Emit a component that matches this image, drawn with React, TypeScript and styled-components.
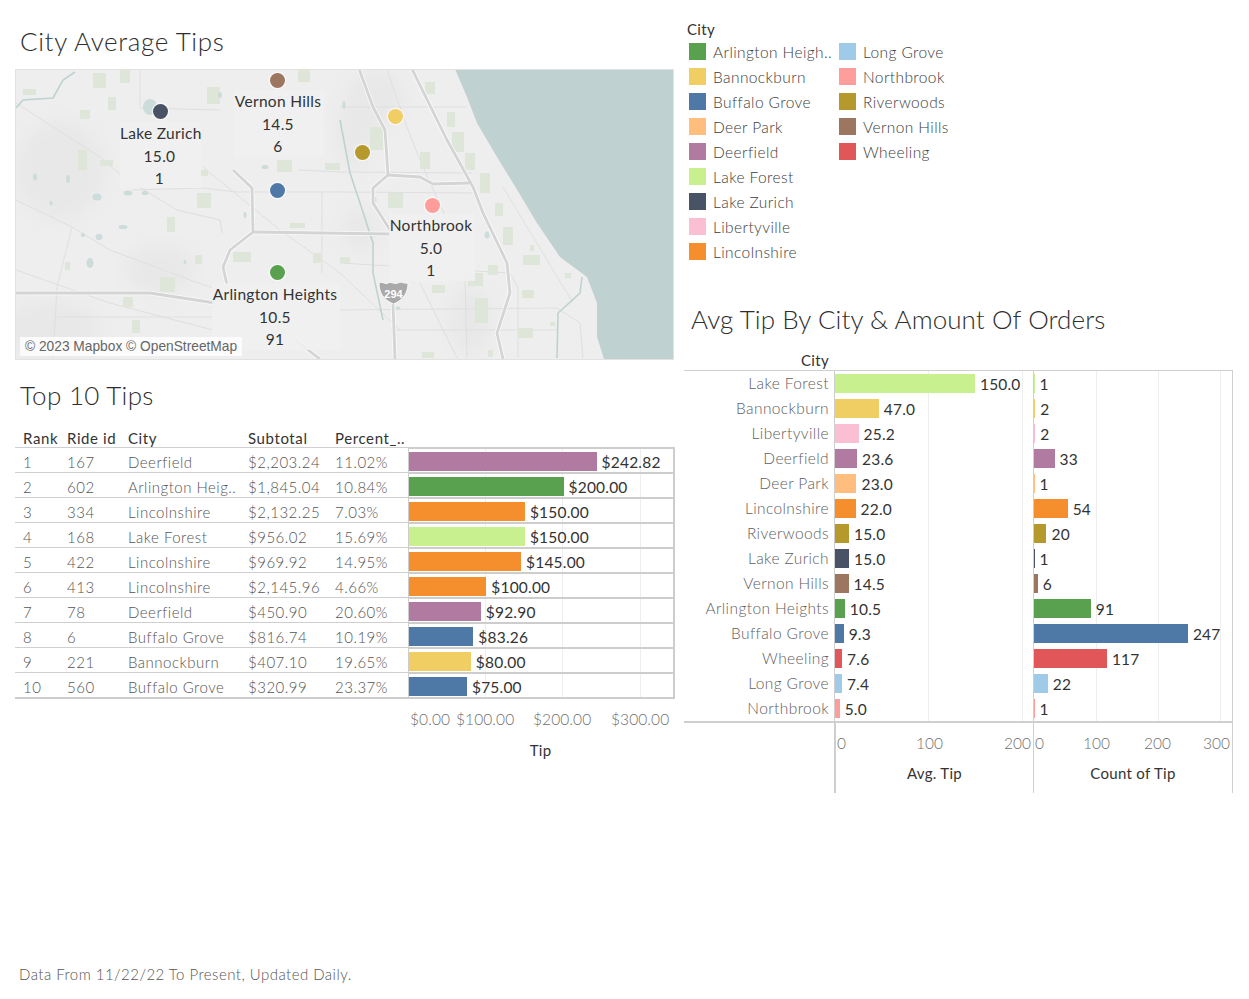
import { FC } from "react";
import styled, { createGlobalStyle } from "styled-components";

const COLORS: Record<string, string> = {
  "Arlington Heights": "#59a14f",
  Bannockburn: "#f1ce63",
  "Buffalo Grove": "#4e79a7",
  "Deer Park": "#ffbe7d",
  Deerfield: "#b07aa1",
  "Lake Forest": "#c9f08f",
  "Lake Zurich": "#495366",
  Libertyville: "#fabfd2",
  Lincolnshire: "#f58e2c",
  "Long Grove": "#a0cbe8",
  Northbrook: "#ff9d9a",
  Riverwoods: "#b6992d",
  "Vernon Hills": "#9d7660",
  Wheeling: "#e15759",
};

const LEGEND = [
  ["Arlington Heigh..", "Arlington Heights"],
  ["Bannockburn", "Bannockburn"],
  ["Buffalo Grove", "Buffalo Grove"],
  ["Deer Park", "Deer Park"],
  ["Deerfield", "Deerfield"],
  ["Lake Forest", "Lake Forest"],
  ["Lake Zurich", "Lake Zurich"],
  ["Libertyville", "Libertyville"],
  ["Lincolnshire", "Lincolnshire"],
  ["Long Grove", "Long Grove"],
  ["Northbrook", "Northbrook"],
  ["Riverwoods", "Riverwoods"],
  ["Vernon Hills", "Vernon Hills"],
  ["Wheeling", "Wheeling"],
];

const TIPS = [
  { rank: 1, ride: 167, city: "Deerfield", sub: "$2,203.24", pct: "11.02%", tip: 242.82 },
  { rank: 2, ride: 602, city: "Arlington Heights", label: "Arlington Heig..", sub: "$1,845.04", pct: "10.84%", tip: 200 },
  { rank: 3, ride: 334, city: "Lincolnshire", sub: "$2,132.25", pct: "7.03%", tip: 150 },
  { rank: 4, ride: 168, city: "Lake Forest", sub: "$956.02", pct: "15.69%", tip: 150 },
  { rank: 5, ride: 422, city: "Lincolnshire", sub: "$969.92", pct: "14.95%", tip: 145 },
  { rank: 6, ride: 413, city: "Lincolnshire", sub: "$2,145.96", pct: "4.66%", tip: 100 },
  { rank: 7, ride: 78, city: "Deerfield", sub: "$450.90", pct: "20.60%", tip: 92.9 },
  { rank: 8, ride: 6, city: "Buffalo Grove", sub: "$816.74", pct: "10.19%", tip: 83.26 },
  { rank: 9, ride: 221, city: "Bannockburn", sub: "$407.10", pct: "19.65%", tip: 80 },
  { rank: 10, ride: 560, city: "Buffalo Grove", sub: "$320.99", pct: "23.37%", tip: 75 },
];

const CITIES: [string, number, number][] = [
  ["Lake Forest", 150, 1],
  ["Bannockburn", 47, 2],
  ["Libertyville", 25.2, 2],
  ["Deerfield", 23.6, 33],
  ["Deer Park", 23, 1],
  ["Lincolnshire", 22, 54],
  ["Riverwoods", 15, 20],
  ["Lake Zurich", 15, 1],
  ["Vernon Hills", 14.5, 6],
  ["Arlington Heights", 10.5, 91],
  ["Buffalo Grove", 9.3, 247],
  ["Wheeling", 7.6, 117],
  ["Long Grove", 7.4, 22],
  ["Northbrook", 5, 1],
];

const PARKS: number[][] = [
  [80, 110, 10, 9], [78, 150, 9, 20], [100, 160, 13, 6], [167, 217, 8, 15], [197, 193, 14, 15],
  [233, 252, 18, 10], [160, 277, 15, 15], [325, 163, 15, 7], [277, 160, 15, 12], [313, 253, 8, 10],
  [290, 223, 15, 5], [123, 297, 10, 10], [132, 320, 8, 13], [298, 70, 12, 12], [120, 70, 10, 13],
  [93, 73, 13, 15], [207, 87, 13, 17], [108, 97, 8, 13], [23, 89, 13, 6], [370, 127, 13, 23],
  [447, 112, 8, 15], [452, 132, 12, 20], [465, 153, 10, 17], [420, 152, 10, 17], [480, 173, 10, 20],
  [388, 193, 15, 15], [495, 203, 8, 13], [503, 227, 10, 18], [523, 255, 17, 10], [522, 290, 12, 8],
  [488, 265, 10, 10], [468, 273, 15, 13], [432, 285, 13, 8], [475, 298, 13, 25], [518, 328, 15, 10],
  [422, 352, 12, 6], [488, 350, 5, 7], [425, 82, 10, 12], [340, 257, 10, 6], [195, 255, 7, 9],
  [65, 262, 5, 8], [200, 170, 8, 6], [530, 245, 4, 6], [565, 273, 6, 5], [550, 322, 5, 4],
];

const PONDS: number[][] = [
  [150, 107, 14, 16], [97, 197, 9, 7], [90, 263, 7, 10], [68, 179, 4, 8], [35, 177, 4, 7],
  [123, 227, 9, 4], [99, 237, 7, 6], [128, 193, 9, 5], [265, 167, 7, 4], [145, 193, 7, 4],
  [220, 95, 4, 6], [51, 203, 3, 5], [83, 235, 4, 4], [245, 215, 3, 6], [185, 262, 3, 4],
  [375, 200, 3, 6], [487, 235, 5, 7], [398, 308, 5, 3], [344, 105, 3, 8], [280, 97, 4, 3],
];

const THIN_ROADS = [
  "M16 103L100 157L123 177L177 210L220 220L222 233",
  "M203 167L280 230L340 273L400 330",
  "M16 200L72 227L110 250L190 280L225 292",
  "M72 227L57 287L53 358",
  "M16 270L110 303L213 330",
  "M140 70L140 108L220 110",
  "M57 317L213 317",
  "M132 190L203 188L237 192L340 192L473 193",
  "M298 170L340 172L472 173",
  "M322 192L322 273",
  "M340 107L467 107",
  "M387 70L407 127L420 160L450 227",
  "M420 283L457 358",
  "M340 263L510 273L518 287L518 358",
  "M340 310L557 308L580 323L583 358",
  "M390 330L557 330",
  "M503 187L573 303",
  "M465 277L467 358",
];

const MAIN_ROADS = [
  "M359 69L373 107L385 130L388 175L373 188L373 203L390 230",
  "M388 175L420 177L433 184L470 183",
  "M412 69L447 140L473 187L483 213L507 263L510 293L497 333L503 359",
  "M393 303L395 359",
  "M233 170L252 188L253 232L230 250L223 267L227 285",
  "M16 293L150 293L215 303",
  "M253 232L390 234",
  "M295 340L320 359",
];

const PINS = [
  { city: "Lake Zurich", x: 160, y: 111 },
  { city: "Vernon Hills", x: 277, y: 80 },
  { city: "Buffalo Grove", x: 277, y: 190 },
  { city: "Arlington Heights", x: 277, y: 272 },
  { city: "Bannockburn", x: 395, y: 116 },
  { city: "Riverwoods", x: 362, y: 152 },
  { city: "Northbrook", x: 432, y: 205 },
];

const MAP_LABELS = [
  { lines: ["Lake Zurich", "15.0", "1"], x: 120, y: 122, w: 81, h: 66 },
  { lines: ["Vernon Hills", "14.5", "6"], x: 234, y: 90, w: 90, h: 67 },
  { lines: ["Northbrook", "5.0", "1"], x: 389, y: 214, w: 86, h: 67 },
  { lines: ["Arlington Heights", "10.5", "91"], x: 212, y: 283, w: 128, h: 67 },
];

const GlobalStyle = createGlobalStyle`
  html, body { margin: 0; padding: 0; background: #fff; }
  body { font-family: Lato, "Open Sans", sans-serif; }
`;

const Page = styled.div`
  width: 1249px;
  height: 999px;
  display: flex;
  flex-direction: column;
  overflow: hidden;
`;
const Columns = styled.div`
  display: flex;
  height: 964px;
`;
const LeftColumn = styled.div`
  width: 660px;
  margin-left: 15px;
  display: flex;
  flex-direction: column;
`;
const RightColumn = styled.div`
  width: 549px;
  margin-left: 9px;
  display: flex;
  flex-direction: column;
`;
const Title = styled.h2<{ $spacing: number }>`
  margin: 0;
  padding-left: 5px;
  height: 42px;
  font-size: 26px;
  line-height: 42px;
  font-weight: 300;
  letter-spacing: ${(p) => p.$spacing}px;
  color: #2e2e2e;
`;
const MapTitle = styled(Title)`
  margin-top: 20px;
  margin-bottom: 7px;
`;
const TipsTitle = styled(Title)`
  margin-top: 14px;
  margin-bottom: 2px;
`;
const OrdersTitle = styled(Title)`
  margin-top: 36px;
  margin-bottom: 10px;
  padding-left: 7px;
`;

const MapFrame = styled.div`
  position: relative;
  width: 659px;
  height: 291px;
  box-sizing: border-box;
  border: 1px solid #e2e2e2;
  background: #ededed;
  overflow: hidden;
`;
const MapDrawing = styled.svg`
  position: absolute;
  left: -1px;
  top: -1px;
  width: 659px;
  height: 291px;
`;
const Pin = styled.span<{ $color: string; $x: number; $y: number }>`
  position: absolute;
  left: ${(p) => p.$x - 16 - 7.5}px;
  top: ${(p) => p.$y - 70 - 7.5}px;
  width: 15px;
  height: 15px;
  border-radius: 50%;
  background: ${(p) => p.$color};
  box-shadow: 0 0 0 1.5px rgba(255, 255, 255, 0.6);
`;
const MapLabel = styled.div<{ $x: number; $y: number; $w: number; $h: number }>`
  position: absolute;
  left: ${(p) => p.$x - 16}px;
  top: ${(p) => p.$y - 70}px;
  width: ${(p) => p.$w}px;
  height: ${(p) => p.$h}px;
  box-sizing: border-box;
  padding-right: 2px;
  background: rgba(240, 240, 240, 0.88);
  text-align: center;
  font-size: 15.5px;
  line-height: 22.5px;
  letter-spacing: 0.3px;
  color: #333;
  white-space: nowrap;
`;
const Attribution = styled.div`
  position: absolute;
  left: 4px;
  bottom: 3px;
  padding: 0 5px;
  height: 19px;
  line-height: 19px;
  background: rgba(255, 255, 255, 0.8);
  font-family: "Liberation Sans", Arial, sans-serif;
  font-size: 13.75px;
  color: #666;
`;

const TableWrap = styled.div`
  margin-top: 10px;
  font-size: 15px;
  letter-spacing: 0.5px;
`;
const HeaderRow = styled.div`
  display: grid;
  grid-template-columns: 44px 61px 120px 87px 73px;
  padding-left: 8px;
  height: 19px;
  line-height: 20px;
  letter-spacing: 0.6px;
  color: #333;
  white-space: nowrap;
`;
const TableBody = styled.div`
  position: relative;
  width: 660px;
`;
const TipRow = styled.div`
  display: flex;
  height: 25px;
  box-sizing: border-box;
`;
const Cells = styled.div`
  width: 393px;
  display: grid;
  grid-template-columns: 44px 61px 120px 87px 73px;
  padding-left: 8px;
  box-sizing: border-box;
  border-top: 1px solid #cfcfcf;
  line-height: 28px;
  font-weight: 300;
  color: #555;
  white-space: nowrap;
`;
const BarCell = styled.div`
  position: relative;
  width: 267px;
  display: flex;
  align-items: center;
  box-sizing: border-box;
  padding-top: 2px;
  border-top: 2px solid #cdcdcd;
  border-left: 1px solid #cdcdcd;
  border-right: 2px solid #cdcdcd;
  color: #333;
`;
const Bar = styled.div<{ $color: string }>`
  height: 19px;
  flex-shrink: 0;
  box-sizing: border-box;
  background: ${(p) => p.$color};
  position: relative;
  z-index: 1;
`;
const BarValue = styled.span`
  position: relative;
  z-index: 1;
  margin-left: 5px;
  font-size: 15.5px;
  letter-spacing: 0.2px;
  white-space: nowrap;
  color: #333;
`;
const TableEnd = styled.div`
  width: 660px;
  border-top: 2px solid #cdcdcd;
`;
const GridLine = styled.span<{ $x: number }>`
  position: absolute;
  left: ${(p) => p.$x}px;
  top: 0;
  bottom: 0;
  width: 1px;
  background: #eee;
`;
const TipAxis = styled.div`
  position: relative;
  margin-left: 393px;
  height: 20px;
  margin-top: 10px;
  color: #6e6e6e;
  font-size: 15.5px;
  font-weight: 300;
  letter-spacing: 0.1px;
`;
const AxisTick = styled.span<{ $x: number }>`
  position: absolute;
  left: ${(p) => p.$x}px;
  top: 0;
  line-height: 20px;
  white-space: nowrap;
`;
const TipAxisTitle = styled.div`
  margin-left: 393px;
  margin-top: 11px;
  width: 265px;
  text-align: center;
  font-size: 15px;
  line-height: 20px;
  letter-spacing: 0.3px;
  color: #333;
`;

const Legend = styled.div`
  margin-top: 19px;
  padding-left: 3px;
  height: 243px;
`;
const LegendTitle = styled.div`
  font-size: 15px;
  line-height: 20px;
  letter-spacing: 0.3px;
  color: #333;
`;
const LegendGrid = styled.div`
  display: grid;
  grid-template-rows: repeat(9, 25px);
  grid-auto-flow: column;
  grid-template-columns: 150px 150px;
`;
const LegendItem = styled.div`
  display: flex;
  align-items: center;
  padding-left: 2px;
  height: 25px;
  font-size: 15.5px;
  letter-spacing: 0.4px;
  font-weight: 300;
  color: #3c3c3c;
  white-space: nowrap;
`;
const Swatch = styled.span<{ $color: string }>`
  width: 17px;
  height: 17px;
  margin-right: 7px;
  background: ${(p) => p.$color};
  flex-shrink: 0;
`;

const Chart = styled.div`
  width: 549px;
  font-size: 15.5px;
  letter-spacing: 0.3px;
`;
const ChartHeader = styled.div`
  height: 21px;
  line-height: 20px;
  font-size: 15px;
  color: #333;
  box-sizing: border-box;
  border-bottom: 1px solid #cfcfcf;
  width: 549px;
  padding-left: 117px;
`;
const ChartBody = styled.div`
  display: grid;
  grid-template-columns: 151px 198px 199px;
  width: 549px;
  border-right: 1px solid #cfcfcf;
  box-sizing: border-box;
`;
const Labels = styled.div`
  display: flex;
  flex-direction: column;
  border-right: 1px solid #cfcfcf;
`;
const CityLabel = styled.div`
  height: 25px;
  line-height: 25px;
  text-align: right;
  padding-right: 5px;
  font-weight: 300;
  letter-spacing: 0.4px;
  color: #606060;
  white-space: nowrap;
`;
const Pane = styled.div<{ $divider?: boolean }>`
  position: relative;
  display: flex;
  flex-direction: column;
  ${(p) => (p.$divider ? "border-left: 1px solid #cfcfcf;" : "")}
`;
const PaneRow = styled.div`
  height: 25px;
  display: flex;
  align-items: center;
  color: #333;
`;
const ChartAxisLine = styled.div`
  width: 549px;
  border-top: 2px solid #cfcfcf;
`;
const ChartFoot = styled.div`
  display: grid;
  grid-template-columns: 150px 199px 199px;
  width: 549px;
  height: 70px;
  box-sizing: border-box;
  border-right: 1px solid #cfcfcf;
`;
const FootPane = styled.div<{ $thick?: boolean }>`
  position: relative;
  border-left: ${(p) => (p.$thick ? "2px" : "1px")} solid #cfcfcf;
`;
const FootTick = styled.span<{ $x: number }>`
  position: absolute;
  left: ${(p) => p.$x}px;
  top: 10px;
  line-height: 20px;
  font-weight: 300;
  letter-spacing: 0;
  color: #6e6e6e;
  white-space: nowrap;
`;
const FootTitle = styled.div`
  position: absolute;
  left: 0;
  right: 0;
  top: 40px;
  text-align: center;
  font-size: 15px;
  line-height: 20px;
  color: #333;
`;
const Footnote = styled.div`
  padding-left: 19px;
  font-size: 15px;
  line-height: 20px;
  letter-spacing: 0.47px;
  font-weight: 300;
  color: #555;
`;

const MapArt: FC = () => (
  <MapDrawing viewBox="15 69 659 291">
    <defs>
      <filter id="soft" x="-30%" y="-30%" width="160%" height="160%">
        <feGaussianBlur stdDeviation="9" />
      </filter>
    </defs>
    <rect x="15" y="69" width="659" height="291" fill="#eeeeee" />
    <g fill="#e8e8e8" filter="url(#soft)">
      <ellipse cx="60" cy="170" rx="45" ry="50" />
      <ellipse cx="50" cy="330" rx="50" ry="30" />
      <ellipse cx="160" cy="270" rx="35" ry="25" />
      <ellipse cx="375" cy="100" rx="30" ry="30" />
      <ellipse cx="360" cy="230" rx="18" ry="22" />
      <ellipse cx="470" cy="320" rx="22" ry="35" />
      <ellipse cx="355" cy="130" rx="18" ry="40" />
    </g>
    <g fill="none" stroke="#dfdfdf" strokeWidth="1">
      {THIN_ROADS.map((d) => (
        <path key={d} d={d} />
      ))}
    </g>
    <path
      d="M455 69L467 97L477 123L497 157L513 183L537 223L560 257L587 277L597 303L597 337L604 359L674 359L674 69Z"
      fill="#bfd1d0"
    />
    <g fill="none" stroke="#bdd3d1" strokeWidth="1.6">
      <path d="M16 108L23 100L53 98L63 80L75 72" />
      <path d="M340 120L350 173L360 203L373 243L373 273L383 320" />
      <path d="M557 358L558 313L580 293L582 277" />
    </g>
    <g fill="#dde6d8">
      {PARKS.map((p) => (
        <rect key={`${p[0]}-${p[1]}`} x={p[0]} y={p[1]} width={p[2]} height={p[3]} />
      ))}
    </g>
    <g fill="#ccdcdb">
      {PONDS.map((p) => (
        <ellipse key={`${p[0]}-${p[1]}`} cx={p[0]} cy={p[1]} rx={p[2] / 2} ry={p[3] / 2} />
      ))}
    </g>
    <g fill="none" stroke="#fafafa" strokeWidth="4.5" strokeLinejoin="round">
      {MAIN_ROADS.map((d) => (
        <path key={d} d={d} />
      ))}
    </g>
    <g fill="none" stroke="#d4d4d4" strokeWidth="2.8" strokeLinejoin="round">
      {MAIN_ROADS.map((d) => (
        <path key={d} d={d} />
      ))}
    </g>
    <path
      d="M379 283C383 281 385 285 388 283C391 281 395 285 398 283C401 281 404 284 408 283C408 293 403 300 393.500 304C384 300 379 293 379 283Z"
      fill="#a9a9a9"
      stroke="#fff"
      strokeWidth="0.8"
    />
    <text x="393.500" y="298" textAnchor="middle" fontSize="11" fontWeight="700" fill="#fff" fontFamily="Liberation Sans, sans-serif">
      294
    </text>
  </MapDrawing>
);

const App: FC = () => {
  const tipScale = 0.7725;
  return (
    <Page>
      <GlobalStyle />
      <Columns>
        <LeftColumn>
          <MapTitle $spacing={0.62}>City Average Tips</MapTitle>
          <MapFrame>
            <MapArt />
            {PINS.map((pin) => (
              <Pin key={pin.city} $color={COLORS[pin.city]} $x={pin.x} $y={pin.y} />
            ))}
            {MAP_LABELS.map((label) => (
              <MapLabel key={label.lines[0]} $x={label.x} $y={label.y} $w={label.w} $h={label.h}>
                {label.lines.map((line) => (
                  <div key={line}>{line}</div>
                ))}
              </MapLabel>
            ))}
            <Attribution>© 2023 Mapbox © OpenStreetMap</Attribution>
          </MapFrame>
          <TipsTitle $spacing={0.3}>Top 10 Tips</TipsTitle>
          <TableWrap>
            <HeaderRow>
              <span>Rank</span>
              <span>Ride id</span>
              <span>City</span>
              <span>Subtotal</span>
              <span>Percent_..</span>
            </HeaderRow>
            <TableBody>
              {TIPS.map((row) => (
                <TipRow key={row.rank}>
                  <Cells>
                    <span>{row.rank}</span>
                    <span>{row.ride}</span>
                    <span>{row.label ?? row.city}</span>
                    <span>{row.sub}</span>
                    <span>{row.pct}</span>
                  </Cells>
                  <BarCell>
                    <GridLine $x={76} />
                    <GridLine $x={153} />
                    <GridLine $x={231} />
                    <Bar $color={COLORS[row.city]} style={{ width: row.tip * tipScale }} />
                    <BarValue>${row.tip.toFixed(2)}</BarValue>
                  </BarCell>
                </TipRow>
              ))}
              <TableEnd />
            </TableBody>
            <TipAxis>
              <AxisTick $x={2}>$0.00</AxisTick>
              <AxisTick $x={48}>$100.00</AxisTick>
              <AxisTick $x={125}>$200.00</AxisTick>
              <AxisTick $x={203}>$300.00</AxisTick>
            </TipAxis>
            <TipAxisTitle>Tip</TipAxisTitle>
          </TableWrap>
        </LeftColumn>
        <RightColumn>
          <Legend>
            <LegendTitle>City</LegendTitle>
            <LegendGrid>
              {LEGEND.map(([label, city]) => (
                <LegendItem key={city}>
                  <Swatch $color={COLORS[city]} />
                  {label}
                </LegendItem>
              ))}
            </LegendGrid>
          </Legend>
          <OrdersTitle $spacing={0.08}>Avg Tip By City &amp; Amount Of Orders</OrdersTitle>
          <Chart>
            <ChartHeader>City</ChartHeader>
            <ChartBody>
              <Labels>
                {CITIES.map(([city]) => (
                  <CityLabel key={city}>{city}</CityLabel>
                ))}
              </Labels>
              <Pane>
                <GridLine $x={93} />
                <GridLine $x={187} />
                {CITIES.map(([city, avg]) => (
                  <PaneRow key={city}>
                    <Bar $color={COLORS[city]} style={{ width: avg * 0.933 }} />
                    <BarValue>{avg.toFixed(1)}</BarValue>
                  </PaneRow>
                ))}
              </Pane>
              <Pane $divider>
                <GridLine $x={62} />
                <GridLine $x={124} />
                <GridLine $x={186} />
                {CITIES.map(([city, , count]) => (
                  <PaneRow key={city}>
                    <Bar $color={COLORS[city]} style={{ width: count * 0.623 }} />
                    <BarValue>{count}</BarValue>
                  </PaneRow>
                ))}
              </Pane>
            </ChartBody>
            <ChartAxisLine />
            <ChartFoot>
              <div />
              <FootPane $thick>
                <FootTick $x={1}>0</FootTick>
                <FootTick $x={80}>100</FootTick>
                <FootTick $x={168}>200</FootTick>
                <FootTitle>Avg. Tip</FootTitle>
              </FootPane>
              <FootPane>
                <FootTick $x={1}>0</FootTick>
                <FootTick $x={49}>100</FootTick>
                <FootTick $x={110}>200</FootTick>
                <FootTick $x={169}>300</FootTick>
                <FootTitle>Count of Tip</FootTitle>
              </FootPane>
            </ChartFoot>
          </Chart>
        </RightColumn>
      </Columns>
      <Footnote>Data From 11/22/22 To Present, Updated Daily.</Footnote>
    </Page>
  );
};

export default App;
